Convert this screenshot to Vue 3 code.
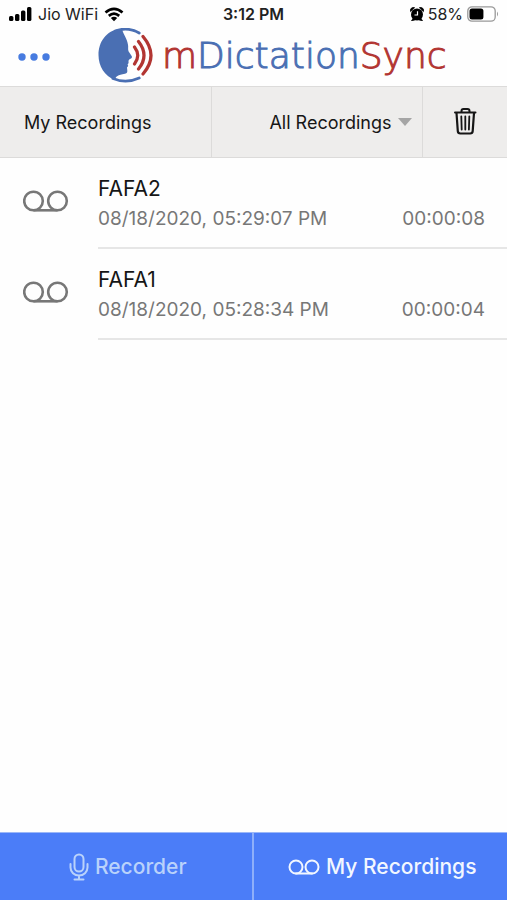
<script setup>
import { ref, computed } from 'vue'

const filter = ref('All Recordings')
const activeTab = ref('My Recordings')
const recordings = ref([
  { name: 'FAFA2', date: '08/18/2020, 05:29:07 PM', length: '00:00:08' },
  { name: 'FAFA1', date: '08/18/2020, 05:28:34 PM', length: '00:00:04' },
])
const batteryLevel = ref(58)
const batteryWidth = computed(() => (batteryLevel.value / 100) * 24)
</script>

<template>
  <div class="screen">
    <div class="status">
      <div class="status-side">
        <svg class="signal" viewBox="0 0 24 16" aria-hidden="true">
          <rect x="1" y="10" width="4.400" height="5" rx="1.500" />
          <rect x="7" y="8" width="4.400" height="7" rx="1.500" />
          <rect x="13" y="4.500" width="4.400" height="10.500" rx="1.500" />
          <rect x="19" y="1" width="4.400" height="14" rx="1.500" />
        </svg>
        <span>Jio WiFi</span>
        <svg class="wifi" viewBox="0 0 20 15" aria-hidden="true">
          <path d="M1.500 5.500Q10-1.800 18.500 5.500M4.800 8.900Q10 4.500 15.200 8.900" fill="none" stroke="#000" stroke-width="2.700" />
          <path d="M6.800 11Q10 8.400 13.200 11L10 14.300z" />
        </svg>
      </div>
      <strong class="clock">3:12 PM</strong>
      <div class="status-side status-end">
        <svg class="alarm" viewBox="0 0 14 14" aria-hidden="true">
          <circle cx="7" cy="7.500" r="6" />
          <path d="M.6 4.600A3 3 0 0 1 4.600.7zM13.400 4.600A3 3 0 0 0 9.400.7zM1.500 13.800l2-3 2 2zM12.500 13.800l-2-3-2 2z" stroke="#000" stroke-width=".8" />
          <path d="M7.500 4.200V8H4.500" fill="none" stroke="#fff" stroke-width="1.200" />
        </svg>
        <span>{{ batteryLevel }}%</span>
        <svg class="battery" viewBox="0 0 32 16" aria-hidden="true">
          <rect x=".8" y=".8" width="27.400" height="14.400" rx="4.200" fill="#fff" stroke="#999" stroke-width="1.300" />
          <rect x="2.500" y="2.500" :width="batteryWidth" height="11" rx="2.500" />
          <path d="M30 5.500q2 2.500 0 5z" fill="#999" />
        </svg>
      </div>
    </div>

    <header class="header">
      <button class="menu" type="button" aria-label="Menu">
        <svg viewBox="0 0 32 8" aria-hidden="true">
          <circle cx="4" cy="4" r="3.700" />
          <circle cx="16" cy="4" r="3.700" />
          <circle cx="28" cy="4" r="3.700" />
        </svg>
      </button>
      <h1 class="brand">
        <svg class="logo" viewBox="0 0 56 56" aria-hidden="true">
          <path d="M21 1C8 3 .5 14 .5 27c0 11 6 21 16.500 25 .3-3.500 3-5.300 10-6.300 2-.4 2.700-1.600 2.200-4.200l-.2-2 1.200-1.500-.6-1.500 1-1.500c-.2-2 0-2.800.6-3.500l2.200-1.300q1-.8.400-2l-3.300-5c-.8-2.500 0-4-.5-6.500C29 10 26 8 24 1z" fill="#4a6fb3" />
          <path d="M17 3Q30-1.500 41.200 5M15 50.500Q28 56 41.200 50" fill="none" stroke="#4a6fb3" stroke-width="2.800" stroke-linecap="round" />
          <path d="M36.500 19Q43 27.500 36.500 36M40.500 13.500Q51.500 27.500 40.500 41M45 8.500Q61 27.500 45 46" fill="none" stroke="#b23532" stroke-width="3.200" stroke-linecap="round" />
        </svg>
        <span class="wordmark"><span class="red">m</span>Dictation<span class="red">Sync</span></span>
      </h1>
    </header>

    <div class="toolbar">
      <h2 class="title">My Recordings</h2>
      <div class="filter">
        <select v-model="filter" aria-label="Filter recordings">
          <option>All Recordings</option>
        </select>
        <svg class="caret" viewBox="0 0 14 8" aria-hidden="true"><path d="M0 0h14L7 8z" /></svg>
      </div>
      <button class="delete" type="button" aria-label="Delete recordings">
        <svg viewBox="0 0 24 28" fill="none" stroke="#161616" stroke-linecap="round" stroke-linejoin="round" aria-hidden="true">
          <path d="M2 4.500h20.500M8.500 4V3Q8.500 1 10.500 1h4q2 0 2 2v1" stroke-width="2" />
          <path d="M3.500 5l1.300 18.200Q5 25.500 7.300 25.500h9.900q2.300 0 2.500-2.300L21 5" stroke-width="2.200" />
          <path d="M8.300 8.500l.4 13M12.300 8.500v13M16.300 8.500l-.4 13" stroke-width="1.800" />
        </svg>
      </button>
    </div>

    <main class="main">
      <ul class="list">
        <li v-for="item in recordings" :key="item.name" class="row">
          <svg class="tape" viewBox="0 0 46 22" aria-hidden="true">
            <circle cx="10.500" cy="11" r="9.300" />
            <circle cx="34.500" cy="11" r="9.300" />
            <path d="M10.500 20.300h24" />
          </svg>
          <div class="details">
            <h3 class="name">{{ item.name }}</h3>
            <div class="meta">
              <span>{{ item.date }}</span>
              <span>{{ item.length }}</span>
            </div>
          </div>
        </li>
      </ul>
    </main>

    <nav class="tabs">
      <button class="tab" :class="{ active: activeTab === 'Recorder' }" type="button" @click="activeTab = 'Recorder'">
        <svg class="mic" viewBox="0 0 20 28" aria-hidden="true">
          <rect x="5.500" y="1.500" width="9" height="17" rx="4.500" />
          <path d="M1.500 11v3.500a8.500 8 0 0 0 17 0V11M10 22.500v4M5.500 26.500h9" />
        </svg>
        <span>Recorder</span>
      </button>
      <button class="tab" :class="{ active: activeTab === 'My Recordings' }" type="button" @click="activeTab = 'My Recordings'">
        <svg class="tape-small" viewBox="0 0 32 16" aria-hidden="true">
          <circle cx="8" cy="8" r="6.500" />
          <circle cx="24" cy="8" r="6.500" />
          <path d="M8 14.500h16" />
        </svg>
        <span>My Recordings</span>
      </button>
    </nav>
  </div>
</template>

<style>
body {
  margin: 0;
  background: #fefefe;
}
</style>

<style scoped>
.screen {
  display: flex;
  flex-direction: column;
  min-height: 100vh;
  font-family: Inter, "Liberation Sans", sans-serif;
  color: #161616;
}
svg {
  display: block;
  flex: none;
}
button,
select {
  margin: 0;
  padding: 0;
  border: 0;
  background: none;
  font: inherit;
  color: inherit;
  cursor: pointer;
}
h1,
h2,
h3 {
  margin: 0;
  font-weight: 400;
}

.status {
  display: grid;
  grid-template-columns: 1fr auto 1fr;
  align-items: center;
  height: 28px;
  padding: 0 8px;
  font-size: 16px;
  color: #222;
}
.status-side {
  display: flex;
  align-items: center;
  gap: 6px;
}
.status-end {
  justify-content: flex-end;
  gap: 4px;
}
.clock {
  font-weight: 600;
}
.signal {
  width: 24px;
  height: 16px;
}
.wifi {
  width: 20px;
  height: 15px;
}
.alarm {
  width: 14px;
  height: 14px;
}
.battery {
  width: 32px;
  height: 16px;
}

.header {
  display: flex;
  align-items: center;
  gap: 48px;
  height: 58px;
  padding: 0 18px;
}
.menu svg {
  width: 32px;
  height: 8px;
  fill: #477be0;
}
.brand {
  display: flex;
  align-items: center;
  gap: 8px;
  padding-bottom: 2px;
}
.logo {
  width: 56px;
  height: 56px;
}
.wordmark {
  font-family: "DejaVu Sans", sans-serif;
  font-size: 36px;
  font-weight: 200;
  line-height: 40px;
  color: #4a6fb3;
  -webkit-text-stroke: 1px currentColor;
}
.red {
  color: #b23532;
}

.toolbar {
  display: grid;
  grid-template-columns: 5fr 5fr 2fr;
  height: 70px;
  border: solid #dcdbda;
  border-width: 1px 0;
  background: #eeedec;
  font-size: 18px;
}
.title {
  display: flex;
  align-items: center;
  padding-left: 24px;
  font-size: 18px;
}
.filter {
  display: grid;
  align-items: center;
  border: solid #dcdbda;
  border-width: 0 1px;
}
.filter select,
.caret {
  grid-area: 1 / 1;
}
.filter select {
  appearance: none;
  width: 100%;
  height: 100%;
  padding-right: 30px;
  text-align-last: right;
}
.caret {
  justify-self: end;
  width: 14px;
  height: 8px;
  margin-right: 10px;
  fill: #a5a5a5;
  pointer-events: none;
}
.delete {
  display: flex;
  align-items: center;
  justify-content: center;
}
.delete svg {
  width: 24px;
  height: 28px;
}

.main {
  flex: 1;
}
.list {
  margin: 0;
  padding: 0;
  list-style: none;
}
.row {
  display: flex;
  gap: 29px;
  padding-left: 23px;
}
.tape {
  width: 46px;
  height: 22px;
  margin-top: 32px;
  fill: none;
  stroke: #777;
  stroke-width: 2.6px;
}
.details {
  flex: 1;
  padding: 16px 22px 13px 0;
  border-bottom: 2px solid #e6e6e6;
}
.name {
  font-size: 21px;
  line-height: 30px;
}
.meta {
  display: flex;
  justify-content: space-between;
  font-size: 19px;
  line-height: 30px;
  color: #777;
}

.tabs {
  display: grid;
  grid-template-columns: 1fr 1fr;
  height: 67px;
  border-top: 1px solid #9bb7f8;
  background: #4b7df8;
  font-size: 21px;
  font-weight: 500;
}
.tab {
  display: flex;
  align-items: center;
  justify-content: center;
  gap: 6px;
  padding-left: 4px;
  color: #b9d2fb;
}
.tab:first-child {
  border-right: 2px solid #8eaffa;
}
.tab.active {
  color: #f2f7ff;
}
.tab svg {
  fill: none;
  stroke: currentColor;
  stroke-width: 2px;
  stroke-linecap: round;
}
.mic {
  width: 20px;
  height: 28px;
}
.tape-small {
  width: 32px;
  height: 16px;
}
</style>
